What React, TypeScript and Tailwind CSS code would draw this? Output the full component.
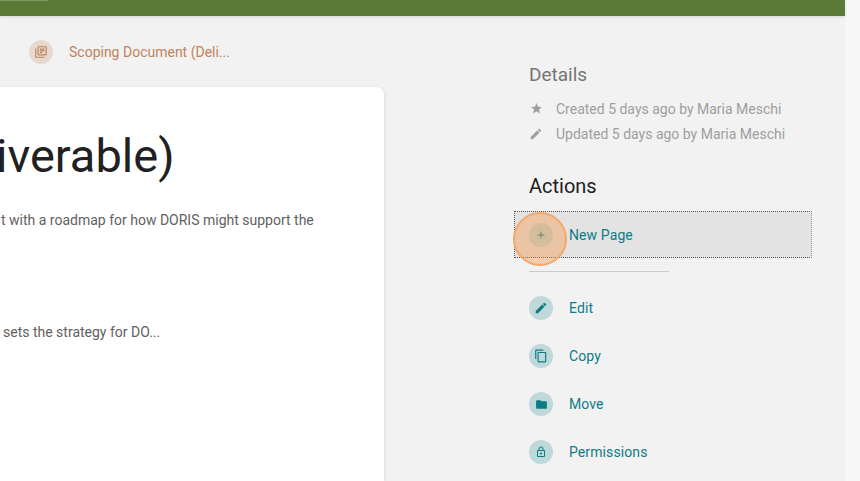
import React from "react";

const P = ({ d, c = "w-4 h-4" }: { d: string; c?: string }) => (
  <svg viewBox="0 0 24 24" className={c} fill="currentColor"><path d={d} /></svg>
);

const pencil = "M3 17.25V21h3.75L17.81 9.94l-3.75-3.75L3 17.25zM20.71 7.04a1 1 0 0 0 0-1.41l-2.34-2.34a1 1 0 0 0-1.41 0l-1.83 1.83 3.75 3.75 1.83-1.83z";
const star = "M12 17.27 18.18 21l-1.64-7.03L22 9.24l-7.19-.61L12 2 9.19 8.63 2 9.24l5.46 4.73L5.82 21z";
const copy = "M16 1H4c-1.1 0-2 .9-2 2v14h2V3h12V1zm3 4H8c-1.1 0-2 .9-2 2v14c0 1.1.9 2 2 2h11c1.1 0 2-.9 2-2V7c0-1.1-.9-2-2-2zm0 16H8V7h11v14z";
const folder = "M10 4H4c-1.1 0-2 .9-2 2v12c0 1.1.9 2 2 2h16c1.1 0 2-.9 2-2V8c0-1.1-.9-2-2-2h-8l-2-2z";
const lock = "M18 8h-1V6c0-2.76-2.24-5-5-5S7 3.24 7 6v2H6c-1.1 0-2 .9-2 2v10c0 1.1.9 2 2 2h12c1.1 0 2-.9 2-2V10c0-1.1-.9-2-2-2zM9 6c0-1.66 1.34-3 3-3s3 1.34 3 3v2H9V6zm9 14H6V10h12v10zm-6-3c1.1 0 2-.9 2-2s-.9-2-2-2-2 .9-2 2 .9 2 2 2z";
const library = "M4 6H2v14c0 1.1.9 2 2 2h14v-2H4V6zm16-4H8c-1.1 0-2 .9-2 2v12c0 1.1.9 2 2 2h12c1.1 0 2-.9 2-2V4c0-1.1-.9-2-2-2zm0 14H8V4h12v12zM10 9h8v2h-8zm0 3h4v2h-4zm0-6h8v2h-8z";

const actions = [
  { label: "Edit", d: pencil, c: "h-3.5 w-3.5" },
  { label: "Copy", d: copy, c: "h-3.5 w-3.5" },
  { label: "Move", d: folder, c: "h-[13px] w-[13px]" },
  { label: "Permissions", d: lock, c: "h-3 w-3" },
];

export default function App() {
  return (
    <div className="flex h-[481px] w-[860px] overflow-hidden bg-[#f7f7f7] font-['Roboto',sans-serif]">
      <div className="flex h-full w-[845px] flex-col bg-[#f2f2f2]">
        <div className="relative h-4 shrink-0 bg-[#5b7a38] shadow-[0_1px_3px_rgba(0,0,0,0.12)]">
          <div className="absolute left-0 top-0 h-px w-12 bg-[#7f9863]" />
        </div>
        <div className="flex min-h-0 flex-1">
          <div className="flex w-[384px] shrink-0 flex-col">
            <div className="flex h-[71px] shrink-0 items-start pl-[29px] pt-6">
              <span className="flex h-6 w-6 items-center justify-center rounded-full bg-[#e8d9d0] text-[#c0835a]">
                <P d={library} c="h-3.5 w-3.5" />
              </span>
              <span className="ml-4 text-sm leading-6 text-[#c0835a]">Scoping Document (Deli...</span>
            </div>
            <div className="min-h-0 flex-1 overflow-hidden rounded-tr-lg bg-white shadow-[0_1px_4px_rgba(0,0,0,0.12)]">
              <h1 className="-ml-[4px] mt-[37px] whitespace-nowrap text-[47px] font-normal leading-[64px] text-[#212121]">iverable)</h1>
              <p className="ml-[1px] mt-[22px] whitespace-nowrap text-sm leading-5 text-[#616161]">t with a roadmap for how DORIS might support the</p>
              <p className="ml-[3px] mt-[92px] whitespace-nowrap text-sm leading-5 text-[#616161]">sets the strategy for DO...</p>
            </div>
          </div>
          <div className="ml-[145px] min-w-0 flex-1 pt-[47px]">
            <h2 className="text-[19px] font-normal leading-6 text-[#757575]">Details</h2>
            <div className="mt-[9px] flex h-[25px] items-center text-[#9e9e9e]">
              <span className="flex w-[14px] justify-center"><P d={star} c="h-[13px] w-[13px]" /></span>
              <span className="ml-[13px] text-sm">Created 5 days ago by Maria Meschi</span>
            </div>
            <div className="flex h-[25px] items-center text-[#9e9e9e]">
              <P d={pencil} c="h-3.5 w-3.5" />
              <span className="ml-[13px] text-sm">Updated 5 days ago by Maria Meschi</span>
            </div>
            <h2 className="mt-[26px] text-xl font-normal leading-7 text-[#212121]">Actions</h2>
            <div className="relative -ml-[15px] mt-[11px] flex h-[47px] w-[298px] items-center border border-dotted border-[#555] border-r-[#999] bg-[#e3e3e3] pl-[14px]">
              <span className="flex h-6 w-6 items-center justify-center rounded-full bg-[#c0d6d6] text-[#0e7c86]">
                <svg viewBox="0 0 24 24" className="h-3 w-3" fill="currentColor"><path d="M19 13h-6v6h-2v-6H5v-2h6V5h2v6h6v2z" /></svg>
              </span>
              <span className="ml-4 text-sm tracking-[0.1px] text-[#0e7c86]">New Page</span>
              <span className="absolute -left-[2px] top-0 h-[54px] w-[54px] rounded-full border-2 border-[#f6a868] bg-[rgba(245,150,70,0.4)]" />
            </div>
            <div className="mt-[13px] h-px w-[140px] bg-[#cccccc]" />
            <div className="mt-[12px]">
              {actions.map((a) => (
                <div key={a.label} className="flex h-12 items-center">
                  <span className="flex h-6 w-6 items-center justify-center rounded-full bg-[#bfd9da] text-[#0e7c86]">
                    <P d={a.d} c={a.c} />
                  </span>
                  <span className="ml-4 text-sm tracking-[0.1px] text-[#0e7c86]">{a.label}</span>
                </div>
              ))}
            </div>
          </div>
        </div>
      </div>
    </div>
  );
}
